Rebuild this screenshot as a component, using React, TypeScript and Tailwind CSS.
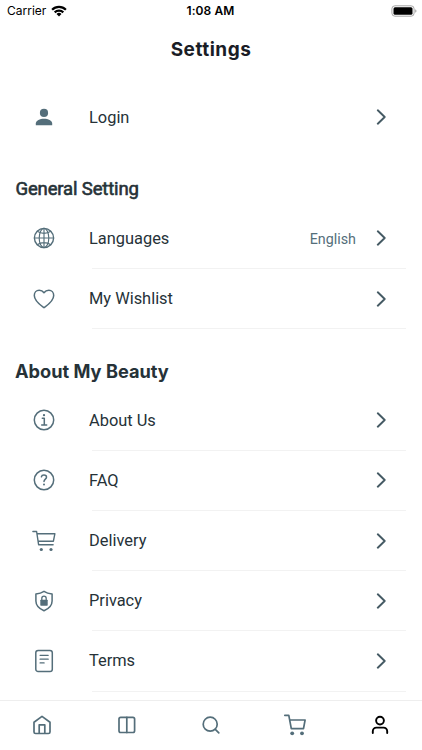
import type { ReactNode } from "react";

const stroke = {
  fill: "none",
  stroke: "currentColor",
  strokeWidth: 1.5,
  strokeLinecap: "round" as const,
  strokeLinejoin: "round" as const,
};

function Icon({ children }: { children: ReactNode }) {
  return (
    <svg className="block h-6 w-6 shrink-0" viewBox="0 0 24 24" {...stroke}>
      {children}
    </svg>
  );
}

const Person = () => (
  <Icon>
    <g fill="currentColor" stroke="none">
      <circle cx="12" cy="7.9" r="4.1" />
      <path d="M3.8 20.2v-1.7c0-3.1 4.1-4.8 8.2-4.8s8.2 1.7 8.2 4.8v1.7z" />
    </g>
  </Icon>
);

const Globe = () => (
  <Icon>
    <g strokeWidth="1.15">
      <circle cx="12" cy="12" r="9.6" strokeWidth="1.4" />
      <ellipse cx="12" cy="12" rx="4.8" ry="9.6" />
      <path d="M12 2.4v19.2M2.4 12h19.2M5.2 5.3c4 2.7 9.6 2.7 13.6 0M5.2 18.7c4-2.7 9.6-2.7 13.6 0" />
    </g>
  </Icon>
);

const Heart = () => (
  <Icon>
    <path d="M12 20.700C9.500 18.800 2.300 14.100 2.300 8.400c0-3 2-5.200 4.900-5.200 2.100 0 3.700 1 4.800 2.500 1.100-1.500 2.700-2.500 4.800-2.500 2.900 0 4.900 2.200 4.900 5.200 0 5.700-7.200 10.400-9.700 12.300z" />
  </Icon>
);

const Info = () => (
  <Icon>
    <circle cx="12" cy="12" r="9.7" />
    <path d="M10.300 10.300h2v6.500M9.700 16.900h5" />
    <circle cx="12" cy="7.200" r="1.150" fill="currentColor" stroke="none" />
  </Icon>
);

const Question = () => (
  <Icon>
    <circle cx="12" cy="12" r="9.7" />
    <path d="M9.400 8.800c.2-1.100 1.200-1.700 2.500-1.700 1.500 0 2.600.8 2.600 2.100 0 1.900-2.500 1.900-2.500 4.200" />
    <circle cx="12" cy="16.500" r="1" fill="currentColor" stroke="none" />
  </Icon>
);

const DeliveryCart = () => (
  <Icon>
    <path strokeWidth="1.400" d="M.9 2.500h3.700l2 13.200h14.500M5.200 4.700h17.700l-1.500 7.500H6.200" />
    <circle cx="9.300" cy="20.500" r="1.600" fill="currentColor" stroke="none" />
    <circle cx="19" cy="20.500" r="1.600" fill="currentColor" stroke="none" />
  </Icon>
);

const Shield = () => (
  <Icon>
    <path d="M12 2.300c2.500 1.600 5 2.300 8.100 2.700v7c0 4.700-3.300 7.700-8.100 9.800-4.800-2.100-8.100-5.100-8.100-9.800V5C7 4.600 9.500 3.900 12 2.300z" />
    <rect x="8.300" y="10.700" width="7.400" height="6" rx=".6" fill="currentColor" stroke="none" />
    <path strokeWidth="1.300" d="M9.800 11V9.400a2.200 2.200 0 0 1 4.400 0V11" />
  </Icon>
);

const Paper = () => (
  <Icon>
    <rect x="3.800" y="1.500" width="16.500" height="21" rx="2.300" />
    <path strokeWidth="1.300" d="M8.100 6.300h8.100M8.100 10.200h8.100M8.100 13.900h4" />
  </Icon>
);

const Home = () => (
  <Icon>
    <path strokeWidth="1.700" d="M4 9.200 12 3.400l8 5.800v9.700a1.600 1.600 0 0 1-1.600 1.600H5.600A1.600 1.600 0 0 1 4 18.900zM9.200 20.400v-8.600h5.600v8.600" />
  </Icon>
);

const Columns = () => (
  <Icon>
    <rect x="4" y="4.300" width="15.600" height="15.200" rx="1.700" strokeWidth="1.700" />
    <path strokeWidth="1.700" d="M11.800 4.300v15.200" />
  </Icon>
);

const Search = () => (
  <Icon>
    <circle cx="11.200" cy="11.200" r="7" strokeWidth="1.700" />
    <path strokeWidth="1.700" d="m16.300 16.300 3.500 3.500" />
  </Icon>
);

const Cart = () => (
  <Icon>
    <path strokeWidth="1.700" d="M1.800 2.300h4l2.500 13.300h12.200l1.600-8.600H6.700" />
    <circle cx="9.200" cy="20.300" r="1.900" fill="currentColor" stroke="none" />
    <circle cx="19" cy="20.300" r="1.900" fill="currentColor" stroke="none" />
  </Icon>
);

const Account = () => (
  <Icon>
    <circle cx="12" cy="7.600" r="3.900" strokeWidth="1.900" />
    <path strokeWidth="1.900" d="M4.800 20v-1.800a3.600 3.600 0 0 1 3.600-3.600h7.200a3.600 3.600 0 0 1 3.600 3.600V20" />
  </Icon>
);

function Row({ icon, label, value, divided = true }: { icon: ReactNode; label: string; value?: string; divided?: boolean }) {
  return (
    <div className="relative flex h-[60.15px] items-center pr-[33px] pb-[1.500px] pl-8 text-[#546e7a]">
      {icon}
      <span className="ml-[33px] flex-1 pt-px text-[16.400px] leading-6 text-[#263238]">{label}</span>
      {value && <span className="mr-[17px] pt-px text-[14.300px] leading-5">{value}</span>}
      <svg className="h-4 w-4 text-[#455a64]" viewBox="0 0 16 16" {...stroke}>
        <path strokeWidth="1.900" d="m4.800 1.300 6.900 6.700-6.900 6.700" />
      </svg>
      {divided && <div className="absolute right-4 bottom-0 left-[92px] h-px bg-[#f2f2f2]" />}
    </div>
  );
}

export default function App() {
  return (
    <div className="flex h-[750px] w-[422px] flex-col overflow-hidden bg-white font-['Roboto',sans-serif]">
      <header className="grid h-[22px] shrink-0 grid-cols-3 items-center pr-[5px] pl-[7px] font-['Inter',sans-serif] text-[12px] text-black">
        <div className="flex items-center gap-[5px]">
          <span>Carrier</span>
          <svg className="h-3 w-4" viewBox="0 0 16 12" fill="none" stroke="currentColor" strokeWidth="2.200">
            <path d="M1.100 4.700a9.800 9.800 0 0 1 13.800 0M3.700 7.400a6.100 6.100 0 0 1 8.600 0" />
            <path d="M8 11.500 5.500 9a3.500 3.500 0 0 1 5 0z" fill="currentColor" stroke="none" />
          </svg>
        </div>
        <span className="pr-[3px] text-center font-semibold tracking-[0.1px]">1:08 AM</span>
        <svg className="h-3 w-[26px] justify-self-end" viewBox="0 0 26 12">
          <rect x=".9" y=".8" width="22.200" height="10.400" rx="3" fill="none" stroke="#a6a6a6" />
          <rect x="2.500" y="2.300" width="19" height="7.400" rx="1.500" />
          <path d="M24.400 4.300c1.300.5 1.300 2.900 0 3.400z" fill="#888" />
        </svg>
      </header>
      <h1 className="mt-[14px] shrink-0 text-center font-['Inter',sans-serif] text-[19px] leading-7 font-bold tracking-[0.500px] text-[#1a1d26]">Settings</h1>
      <main className="min-h-0 flex-1 overflow-hidden pt-[24px]">
        <Row icon={<Person />} label="Login" divided={false} />
        <h2 className="mt-[29px] mb-[8px] pl-[15.500px] text-[18.500px] leading-6 font-normal tracking-[-0.150px] text-[#263238] [-webkit-text-stroke:0.600px_#263238]">General Setting</h2>
        <Row icon={<Globe />} label="Languages" value="English" />
        <Row icon={<Heart />} label="My Wishlist" />
        <h2 className="mt-[30px] mb-[7.500px] pl-[15px] font-['Inter',sans-serif] text-[18.200px] leading-6 font-bold text-[#263238]">About My Beauty</h2>
        <Row icon={<Info />} label="About Us" />
        <Row icon={<Question />} label="FAQ" />
        <Row icon={<DeliveryCart />} label="Delivery" />
        <Row icon={<Shield />} label="Privacy" />
        <Row icon={<Paper />} label="Terms" />
      </main>
      <nav className="grid h-[50px] shrink-0 grid-cols-5 items-center justify-items-center border-t border-[#eeeeee] bg-white pb-[2px] text-[#546e7a]">
        <Home />
        <Columns />
        <Search />
        <Cart />
        <span className="text-black"><Account /></span>
      </nav>
    </div>
  );
}
